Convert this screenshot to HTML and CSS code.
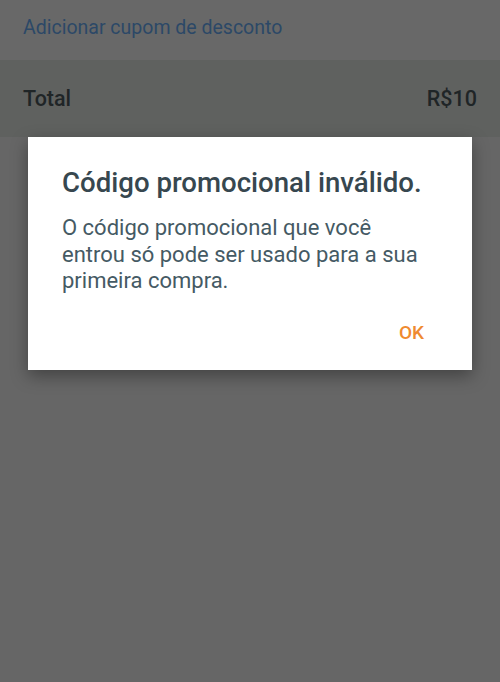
FILE: index.html
```html
<!DOCTYPE html>
<html lang="pt-BR">
	<head>
		<meta charset="utf-8">
		<title>Carrinho</title>
		<link rel="stylesheet" href="styles.css">
	</head>
	<body>
		<div class="coupon">
			<a href="#" class="coupon-link">Adicionar cupom de desconto</a>
		</div>
		<div class="total">
			<span>Total</span>
			<span>R$10</span>
		</div>
		<div class="rest">
			<div class="dialog">
				<h1>Código promocional inválido.</h1>
				<p>O código promocional que você entrou só pode ser usado para a sua primeira compra.</p>
				<div class="actions">
					<button class="ok">OK</button>
				</div>
			</div>
		</div>
	</body>
</html>
```

FILE: styles.css
```css
body {
	margin: 0;
	height: 682px;
	background-color: #666666;
	font-family: Roboto, "Noto Sans", sans-serif;
	display: flex;
	flex-direction: column;
}
.coupon {
	height: 60px;
	padding: 0 23px;
	display: flex;
	align-items: center;
	background-color: #686868;
	box-sizing: border-box;
	padding-bottom: 6px;
}
.coupon-link {
	color: #2c4867;
	text-decoration: none;
	font-size: 19.5px;
}
.total {
	height: 77px;
	padding: 0 23px;
	display: flex;
	justify-content: space-between;
	align-items: center;
	background-color: #5f615f;
	color: #1f2527;
	font-size: 21.5px;
	font-weight: 500;
	box-sizing: border-box;
}
.rest {
	flex: 1;
	padding: 0 28px;
}
.dialog {
	background-color: white;
	height: 233px;
	box-sizing: border-box;
	padding: 30px 44px 0 34px;
	box-shadow: 0 6px 16px rgba(0, 0, 0, 0.35);
}
h1 {
	margin: 0;
	font-size: 27.6px;
	font-weight: 500;
	color: #37474f;
	line-height: 32px;
	white-space: nowrap;
}
p {
	margin: 16px 0 0 0;
	font-size: 22px;
	line-height: 26.5px;
	color: #455a64;
}
.actions {
	display: flex;
	justify-content: flex-end;
	margin-top: 27px;
	margin-right: -10px;
}
.ok {
	border: none;
	background: none;
	padding: 0 14px;
	font-family: inherit;
	font-size: 19px;
	font-weight: 500;
	line-height: 22px;
	color: #ef8a30;
}
```
